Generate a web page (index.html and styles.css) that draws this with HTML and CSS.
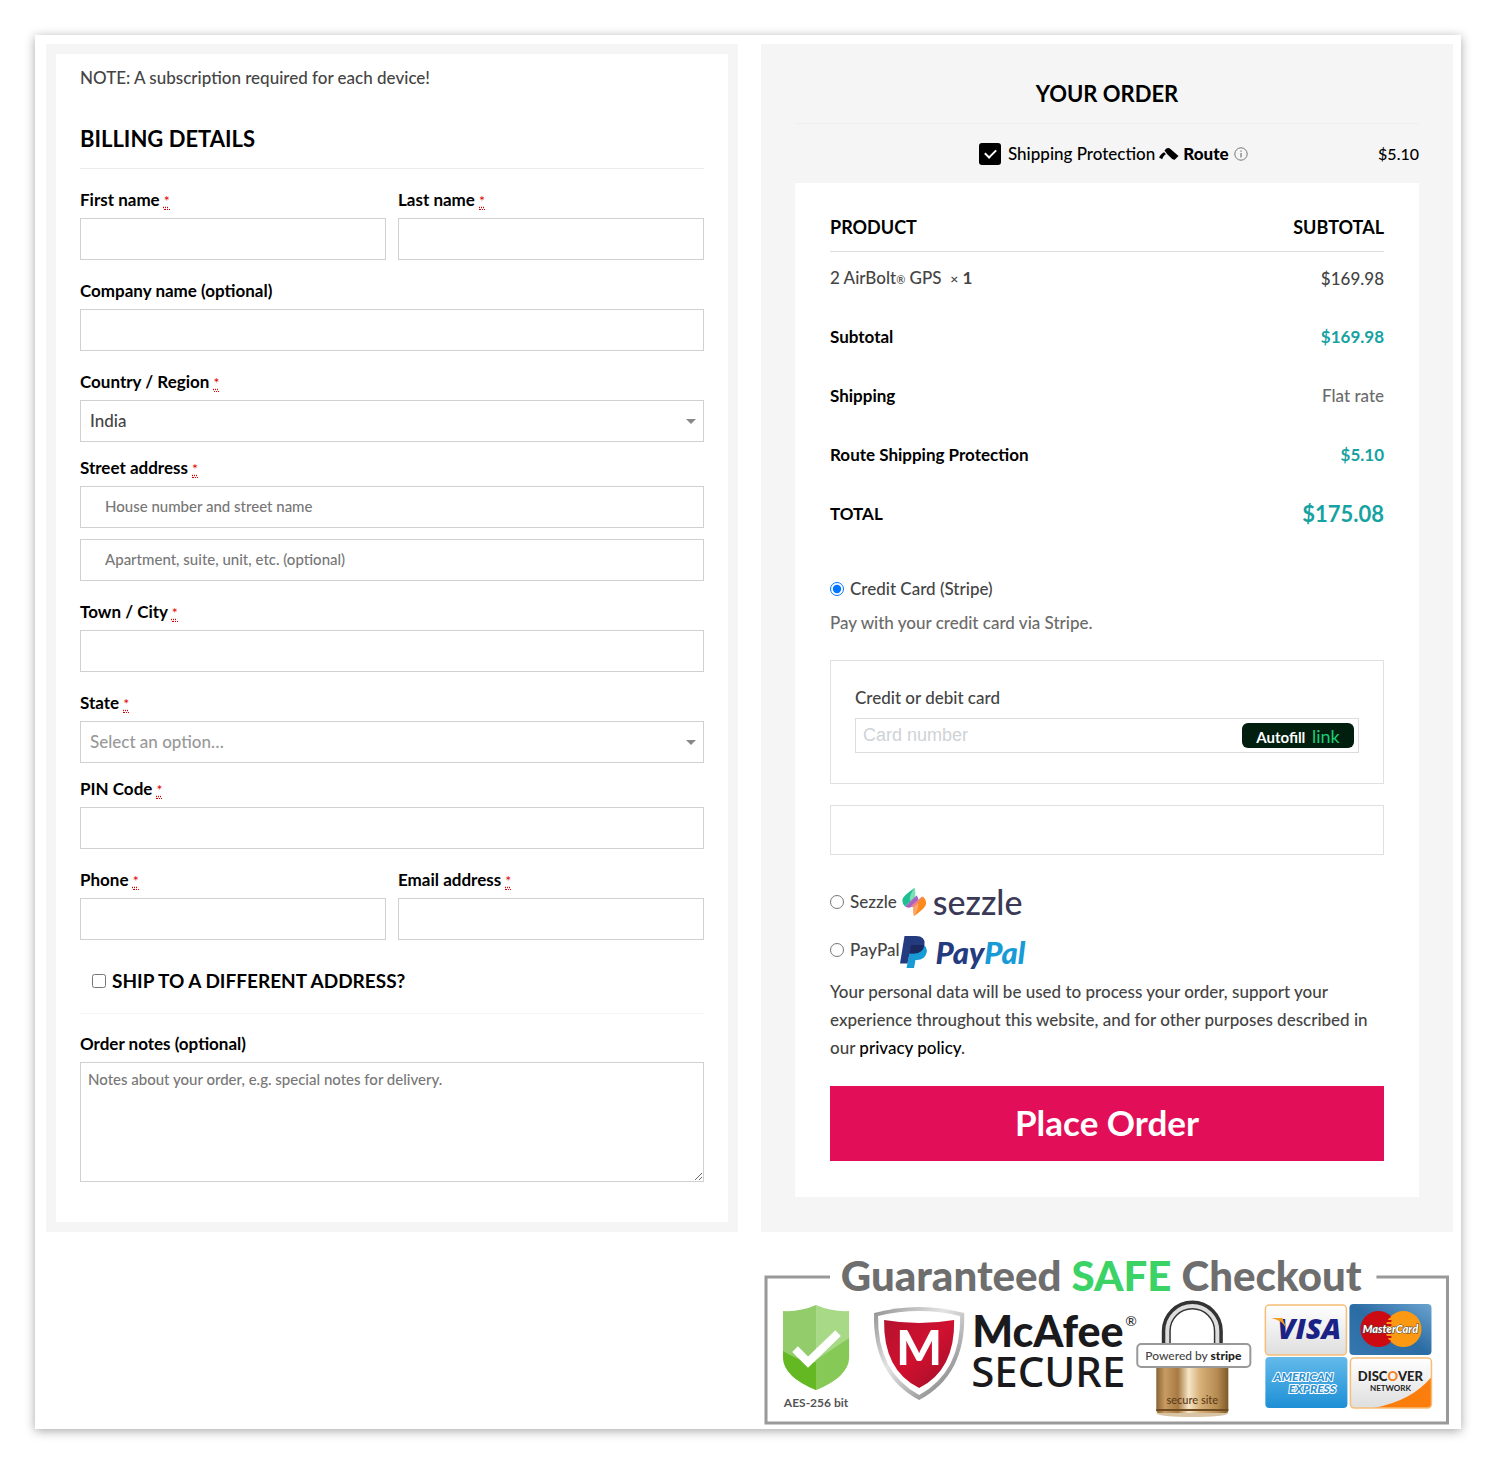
FILE: index.html
```
<!DOCTYPE html>
<html lang="en">
<head>
  <meta charset="UTF-8" />
  <meta name="viewport" content="width=device-width, initial-scale=1.0"/>
  <title>Checkout</title>
  <link rel="stylesheet" href="styles.css">
</head>
<body>

  <form class="checkout">
    <div class="columns">

      <section class="billing">
        <p class="note">NOTE: A subscription required for each device!</p>
        <h2 class="billing-title">Billing details</h2>

        <div class="row">
          <div class="field">
            <label for="first_name">First name <abbr class="required" title="required">*</abbr></label>
            <input type="text" id="first_name" />
          </div>
          <div class="field">
            <label for="last_name">Last name <abbr class="required" title="required">*</abbr></label>
            <input type="text" id="last_name" />
          </div>
        </div>

        <div class="field">
          <label for="company">Company name (optional)</label>
          <input type="text" id="company" />
        </div>

        <div class="field field-select">
          <label for="country">Country / Region <abbr class="required" title="required">*</abbr></label>
          <div class="select">
            <select id="country">
              <option>India</option>
            </select>
          </div>
        </div>

        <div class="field">
          <label for="address_1">Street address <abbr class="required" title="required">*</abbr></label>
          <input type="text" id="address_1" placeholder="House number and street name" />
          <input type="text" id="address_2" placeholder="Apartment, suite, unit, etc. (optional)" aria-label="Apartment, suite, unit, etc. (optional)" />
        </div>

        <div class="field">
          <label for="city">Town / City <abbr class="required" title="required">*</abbr></label>
          <input type="text" id="city" />
        </div>

        <div class="field field-select">
          <label for="state">State <abbr class="required" title="required">*</abbr></label>
          <div class="select">
            <select id="state" class="empty">
              <option>Select an option…</option>
            </select>
          </div>
        </div>

        <div class="field">
          <label for="postcode">PIN Code <abbr class="required" title="required">*</abbr></label>
          <input type="text" id="postcode" />
        </div>

        <div class="row">
          <div class="field">
            <label for="phone">Phone <abbr class="required" title="required">*</abbr></label>
            <input type="tel" id="phone" />
          </div>
          <div class="field">
            <label for="email">Email address <abbr class="required" title="required">*</abbr></label>
            <input type="email" id="email" />
          </div>
        </div>

        <h3 class="ship-different">
          <input type="checkbox" id="ship_different" />
          <label for="ship_different">Ship to a different address?</label>
        </h3>

        <div class="field field-notes">
          <label for="notes">Order notes (optional)</label>
          <textarea id="notes" placeholder="Notes about your order, e.g. special notes for delivery."></textarea>
        </div>
      </section>

      <section class="order">
        <h2 class="order-title">Your order</h2>

        <div class="protection">
          <input type="checkbox" id="protection" checked />
          <label for="protection">Shipping Protection</label>
          <svg class="route-mark" viewBox="0 0 20 12" width="20" height="12" aria-hidden="true">
            <path d="M0 9.500 Q3 4.500 5.200 4.300 L7 6.300 Q5 6.600 3.200 11.200 Z M5.500 2.400 Q8.500 -1.400 11.500 1 L19.500 8 L15.700 11.800 Q14.300 12 13.200 11 L8.500 6.500 Z"/>
          </svg>
          <span class="route-name">Route</span>
          <svg class="info" viewBox="0 0 14 14" width="14" height="14" aria-hidden="true">
            <circle cx="7" cy="7" r="6.200" fill="none" stroke="#777"/>
            <path d="M7 6v4.500M7 3.500v1.300" stroke="#777" stroke-width="1.200"/>
          </svg>
          <span class="protection-price">$5.10</span>
        </div>

        <div class="review">
          <table class="totals">
            <thead>
              <tr><th>Product</th><th>Subtotal</th></tr>
            </thead>
            <tbody>
              <tr><td>2 AirBolt<span class="reg">®</span> GPS&nbsp; <small>×</small> <strong>1</strong></td><td>$169.98</td></tr>
            </tbody>
            <tfoot>
              <tr><th>Subtotal</th><td class="amount">$169.98</td></tr>
              <tr><th>Shipping</th><td class="rate">Flat rate</td></tr>
              <tr><th>Route Shipping Protection</th><td class="amount">$5.10</td></tr>
              <tr class="grand"><th>TOTAL</th><td class="amount">$175.08</td></tr>
            </tfoot>
          </table>

          <div class="method">
            <input type="radio" name="payment" id="pay_stripe" checked />
            <label for="pay_stripe">Credit Card (Stripe)</label>
          </div>
          <p class="method-info">Pay with your credit card via Stripe.</p>

          <div class="card-box">
            <label for="card_number">Credit or debit card</label>
            <div class="card-input">
              <input type="text" id="card_number" placeholder="Card number" />
              <button type="button" class="autofill">Autofill <span>link</span></button>
            </div>
          </div>
          <div class="wallet-box"></div>

          <div class="method method-logo">
            <input type="radio" name="payment" id="pay_sezzle" />
            <label for="pay_sezzle">Sezzle</label>
            <svg class="sezzle-icon" viewBox="0 0 24 28" width="24" height="28" aria-hidden="true">
              <path d="M12.500 0 Q13.500 5 13 9 L3 18.500 Q-1 14 1 10 Q2.500 7 12.500 0Z" fill="#1fbf93"/>
              <path d="M12.500 0 Q14 4 13 9 L8 13 Q6.500 8 12.500 0Z" fill="#7be0b6"/>
              <path d="M3 18.500 L14.500 7.500 Q17 10 16 13 Q13 18 8 19.500 Q5 20 3 18.500Z" fill="#a566c0"/>
              <path d="M9 18 L20.500 8 Q19 14 13 19 Q11 20 9 18Z" fill="#ee7e9c"/>
              <path d="M21 8.500 Q25.500 13 23.500 17.500 Q21 22 12 28 Q11 23 11.500 19 Z" fill="#ff8a1f"/>
              <path d="M11.500 19 L16 15 Q17.500 20 12 28 Q10.500 23 11.500 19Z" fill="#fba96b"/>
            </svg>
            <span class="sezzle-name">sezzle</span>
          </div>
          <div class="method method-logo">
            <input type="radio" name="payment" id="pay_paypal" />
            <label for="pay_paypal">PayPal</label>
            <svg class="paypal-icon" viewBox="0 0 27 32" width="27" height="32" aria-hidden="true">
              <path d="M11 9 H24 Q28 12 26.500 17 Q24.500 24 17 24 H15.500 L14 32 H6.500 L8 25 Z" fill="#179bd7"/>
              <path d="M4.500 0 H16 Q25.500 0 24.500 8.500 Q23 17.500 13.500 17.500 H9.500 L7.500 27.500 H0 Z" fill="#253b80"/>
              <path d="M11 9 H24 Q23.500 17.500 13.500 17.500 H9.500 Z" fill="#1a2a60"/>
            </svg>
            <span class="paypal-name">Pay<span>Pal</span></span>
          </div>

          <p class="privacy">Your personal data will be used to process your order, support your experience throughout this website, and for other purposes described in our <a href="#">privacy policy</a>.</p>
          <button type="submit" class="place-order">Place Order</button>
        </div>
      </section>
    </div>

    <div class="safe">
      <svg class="safe-badge" viewBox="0 -14 685 179" role="img" aria-label="Guaranteed SAFE Checkout">
        <defs>
          <linearGradient id="silver" x1="0" y1="0" x2="1" y2="1">
            <stop offset="0" stop-color="#8f8f8f"/><stop offset=".4" stop-color="#e4e4e4"/><stop offset="1" stop-color="#6d6d6d"/>
          </linearGradient>
          <linearGradient id="red" x1="0" y1="0" x2="1" y2="1">
            <stop offset="0" stop-color="#b5122e"/><stop offset=".5" stop-color="#d0102f"/><stop offset="1" stop-color="#9c1029"/>
          </linearGradient>
          <linearGradient id="brass">
            <stop offset="0" stop-color="#8a6434"/><stop offset=".12" stop-color="#c79c62"/><stop offset=".3" stop-color="#a87a42"/><stop offset=".45" stop-color="#f6e6c8"/><stop offset=".6" stop-color="#d8b27a"/><stop offset=".85" stop-color="#b58a50"/><stop offset="1" stop-color="#7d5929"/>
          </linearGradient>
          <linearGradient id="paper" x1="0" y1="0" x2="0" y2="1">
            <stop offset="0" stop-color="#fff"/><stop offset="1" stop-color="#dedede"/>
          </linearGradient>
          <linearGradient id="mc" x1="1" y1="0" x2="0" y2="1">
            <stop offset="0" stop-color="#6aa3cf"/><stop offset=".5" stop-color="#2b6ca5"/><stop offset="1" stop-color="#3577ae"/>
          </linearGradient>
          <linearGradient id="amex" x1="0" y1="0" x2="0" y2="1">
            <stop offset="0" stop-color="#63baea"/><stop offset="1" stop-color="#1d8fd6"/>
          </linearGradient>
        </defs>

        <path class="frame" d="M66 17H2V163H683V17H612"/>
        <text class="safe-title" x="337" y="31" text-anchor="middle">Guaranteed <tspan class="green">SAFE</tspan> Checkout</text>

        <!-- AES shield -->
        <path d="M52 45 Q36 52 19 51 V98 Q20 117 52 130Z" fill="#93cd6b"/>
        <path d="M52 45 Q68 52 85 51 V98 Q84 117 52 130Z" fill="#a7d987"/>
        <path d="M19 91 Q40 104 52 102 V130 Q20 117 19 98Z" fill="#64b821"/>
        <path d="M52 100 L85 78 V98 Q84 117 52 130Z" fill="#86c957"/>
        <path d="M31 89 L44 102 L74 73" fill="none" stroke="#fff" stroke-width="8"/>
        <text class="aes" x="52" y="147" text-anchor="middle">AES-256 bit</text>

        <!-- McAfee shield -->
        <path d="M110 53 Q155 41 200 53 Q202 115 155 140 Q108 115 110 53Z" fill="url(#silver)"/>
        <path d="M114 56 Q155 46 196 56 Q197 112 155 135 Q113 112 114 56Z" fill="#fff"/>
        <path d="M120 60 Q155 66 190 60 Q191 110 155 128 Q119 110 120 60Z" fill="url(#red)"/>
        <text class="m" x="155" y="105" text-anchor="middle">M</text>
        <text class="mcafee" x="208" y="87">McAfee</text>
        <text class="reg-mark" x="361" y="66">®</text>
        <text class="secure" x="207" y="127">SECURE</text>

        <!-- padlock -->
        <path d="M402 90 V71 A26 26 0 0 1 454 71 V90" fill="none" stroke="#333" stroke-width="9"/>
        <path d="M403 90 V71 A25 25 0 0 1 453 71 V90" fill="none" stroke="#ddd" stroke-width="4"/>
        <ellipse cx="428" cy="153" rx="36" ry="4" fill="#d9c3a5"/>
        <rect x="392" y="100" width="72" height="53" rx="3" fill="url(#brass)"/>
        <path d="M392 150H464" stroke="#6d4a1f" stroke-width="2"/>
        <rect x="373" y="84" width="113" height="23" rx="4" fill="#fff" stroke="#999" stroke-width="2"/>
        <text class="powered" x="429" y="100" text-anchor="middle">Powered by <tspan class="stripe">stripe</tspan></text>
        <text class="secure-site" x="428" y="144" text-anchor="middle">secure site</text>

        <!-- cards -->
        <rect x="501" y="45" width="81" height="50" rx="4" fill="url(#paper)" stroke="#f6bd76" stroke-width="1.500"/>
        <text class="visa" x="545" y="79" text-anchor="middle">VISA</text>
        <path d="M507 58 H518 L522 68 Q517 60 507 58Z" fill="#f49b22"/>
        <rect x="585" y="44" width="82" height="51" rx="4" fill="url(#mc)"/>
        <circle cx="614" cy="69" r="18" fill="#cc0a12"/>
        <circle cx="639" cy="69" r="18" fill="#fb9a12"/>
        <path d="M626 57h-4M627 61h-6M627 65h-6M627 73h-6M627 77h-6M626 81h-4" stroke="#cc0a12" stroke-width="2"/>
        <text class="mastercard" x="626" y="73" text-anchor="middle">MasterCard</text>
        <rect x="501" y="97" width="82" height="51" rx="4" fill="url(#amex)"/>
        <text class="american" x="539" y="121" text-anchor="middle">AMERICAN</text>
        <text class="american" x="548" y="133" text-anchor="middle">EXPRESS</text>
        <rect x="586" y="98" width="81" height="50" rx="4" fill="url(#paper)"/>
        <path d="M609 148 Q647 141 667 117 V144 Q667 148 663 148Z" fill="#fb7d0b"/>
        <rect x="586" y="98" width="81" height="50" rx="4" fill="none" stroke="#f6bd76" stroke-width="1.500"/>
        <text class="discover" x="626" y="121" text-anchor="middle">DISC<tspan class="orange">O</tspan>VER</text>
        <text class="network" x="626" y="131" text-anchor="middle">NETWORK</text>
      </svg>
    </div>
  </form>

</body>
</html>
```
FILE: styles.css
```
:root {
  --ink: #000;
  --text: #444;
  --muted: #6b6b6b;
  --line: #d0d0d0;
  --light: #f5f5f5;
  --teal: #17a2a2;
  --pink: #e20e57;
}

* {
  box-sizing: border-box;
}

body {
  margin: 0;
  padding: 35px;
  background: #fff;
  font-family: Lato, 'Open Sans', sans-serif;
  font-size: 17px;
  font-weight: 500;
  line-height: 24px;
  color: var(--text);
}

h2, h3, p {
  margin: 0;
}

input, select, textarea, button {
  font-family: inherit;
  font-weight: inherit;
}

.checkout {
  padding: 9px 8px 4px 11px;
  background: #fff;
  box-shadow: 0 2px 10px rgba(0,0,0,0.35);
}

.columns {
  display: flex;
  gap: 23px;
}

.billing, .order {
  flex: 1;
  min-width: 0;
}

/* billing */
.billing {
  border: 10px solid var(--light);
  padding: 12px 24px 40px;
}

.billing-title, .order-title {
  color: var(--ink);
  font-size: 22px;
  line-height: 30px;
  font-weight: 700;
  text-transform: uppercase;
}

.billing-title {
  margin-top: 34px;
  margin-bottom: 19px;
  padding-bottom: 14px;
  border-bottom: 1px solid #ececec;
}

.row {
  display: flex;
  gap: 12px;
}

.field {
  flex: 1;
  margin-bottom: 19px;
}

.field-select {
  margin-bottom: 14px;
}

.field label {
  display: block;
  margin-bottom: 6px;
  color: var(--ink);
  font-weight: 700;
}

.required {
  color: #d00;
  font-weight: 400;
  font-size: 14px;
  line-height: 14px;
  text-decoration: underline dotted;
  border-bottom: 1px dotted #d00;
}

.field input, .field select, .field textarea {
  display: block;
  width: 100%;
  height: 42px;
  border: 1px solid var(--line);
  border-radius: 0;
  background: #fff;
  color: var(--text);
  outline: none;
}

.field input {
  padding: 0 24px 2px;
  font-size: 15px;
}

.field input + input {
  margin-top: 11px;
}

.field ::placeholder {
  color: #777;
}

.select {
  position: relative;
}

.field select {
  appearance: none;
  padding: 0 9px 2px;
  font-size: 17px;
}

.field select.empty {
  color: #999;
}

.select::after {
  content: "";
  position: absolute;
  right: 8px;
  top: 19px;
  border: 5px solid transparent;
  border-top-color: #888;
  border-bottom: 0;
}

.ship-different {
  display: flex;
  align-items: center;
  gap: 6px;
  margin: 10px 0 18px;
  padding: 0 12px 20px;
  border-bottom: 1px solid #f4f4f4;
  color: var(--ink);
  font-size: 19px;
  line-height: 24px;
  font-weight: 700;
  text-transform: uppercase;
}

.ship-different input {
  width: 14px;
  height: 14px;
  margin: 0;
}

.field-notes {
  margin-bottom: 0;
}

.field textarea {
  height: 120px;
  padding: 4px 7px;
  font-size: 15px;
  line-height: 24px;
  resize: both;
}

/* order */
.order {
  padding: 35px 34px 34px;
  background: var(--light);
}

.order-title {
  padding-bottom: 14px;
  border-bottom: 1px solid #efefef;
  text-align: center;
}

.protection {
  display: flex;
  align-items: center;
  height: 59px;
  color: var(--ink);
}

.protection input {
  appearance: none;
  display: grid;
  place-items: center;
  width: 22px;
  height: 22px;
  margin: 0 7px 0 184px;
  border-radius: 3px;
  background: #000;
}

.protection input:checked::after {
  content: "";
  width: 5px;
  height: 9px;
  margin-bottom: 3px;
  border: solid #fff;
  border-width: 0 2px 2px 0;
  transform: rotate(45deg);
}

.route-mark {
  margin: 0 4px;
}

.route-name {
  font-weight: 900;
}

.info {
  margin-left: 5px;
}

.protection-price {
  margin-left: auto;
  font-size: 16px;
}

.review {
  padding: 24px 35px 36px;
  background: #fff;
}

.totals {
  width: 100%;
  border-collapse: collapse;
}

.totals th, .totals td {
  height: 59px;
  padding: 0;
  text-align: left;
}

.totals tbody td {
  height: 56px;
}

.totals th {
  color: var(--ink);
  font-weight: 700;
}

.totals th + th, .totals td:last-child {
  text-align: right;
}

.totals thead th {
  height: 44px;
  padding-bottom: 4px;
  border-bottom: 1px solid #ddd;
  font-size: 18px;
  text-transform: uppercase;
}

.totals small {
  font-size: 14px;
}

.reg {
  font-size: 11px;
}

.totals .rate {
  color: var(--muted);
}

.totals .amount {
  color: var(--teal);
  font-weight: 700;
}

.totals .grand .amount {
  font-size: 22px;
}

.method {
  display: flex;
  align-items: center;
  height: 24px;
}

.totals + .method {
  margin-top: 34px;
}

.method input {
  width: 14px;
  height: 14px;
  margin: 0 6px 0 0;
}

.method-info {
  margin-top: 10px;
  color: var(--muted);
}

.card-box {
  margin-top: 25px;
  padding: 25px 24px 30px;
  border: 1px solid #e0e0e0;
}

.card-box label {
  display: block;
  margin-bottom: 8px;
}

.card-input {
  display: flex;
  align-items: center;
  padding: 4px;
  border: 1px solid #dcdcdc;
}

.card-input input {
  flex: 1;
  min-width: 0;
  padding: 0 3px;
  border: 0;
  outline: none;
  font-family: 'Liberation Sans', sans-serif;
  font-size: 18px;
  font-weight: 400;
}

.card-input ::placeholder {
  color: #cfd3d6;
}

.autofill {
  width: 112px;
  height: 25px;
  padding: 0;
  border: 0;
  border-radius: 6px;
  background: #011e0f;
  color: #fff;
  font-size: 15px;
  font-weight: 700;
  white-space: nowrap;
}

.autofill span {
  margin-left: 3px;
  color: #1bce74;
  font-size: 18px;
  font-weight: 400;
}

.wallet-box {
  height: 50px;
  margin: 21px 0 23px;
  border: 1px solid #e0e0e0;
}

.method-logo {
  height: 48px;
}

.sezzle-icon {
  margin: 0 7px 0 5px;
}

.sezzle-name {
  color: #3b3a56;
  font-size: 34px;
}

.paypal-icon {
  margin-top: 4px;
  margin-right: 9px;
}

.paypal-name {
  margin-top: 4px;
  color: #253b80;
  font-size: 31px;
  font-weight: 900;
  font-style: italic;
}

.paypal-name span {
  color: #179bd7;
}

.privacy {
  margin-top: 4px;
  line-height: 28px;
}

.privacy a {
  color: var(--ink);
  text-decoration: none;
}

.place-order {
  display: block;
  width: 100%;
  height: 75px;
  margin-top: 24px;
  padding-bottom: 4px;
  border: 0;
  background: var(--pink);
  color: #fff;
  font-size: 35px;
  font-weight: 700;
  cursor: pointer;
}

/* trust badge */
.safe {
  width: 50%;
  margin-left: auto;
  padding: 14px 4px 0 14px;
}

.safe-badge {
  display: block;
  width: 100%;
}

.frame {
  fill: none;
  stroke: #999;
  stroke-width: 3;
}

.safe-title {
  fill: #6e6e6e;
  font-size: 42px;
  font-weight: 900;
}

.green {
  fill: #3bd266;
}

.aes {
  fill: #555;
  font-size: 12px;
  font-weight: 700;
}

.m {
  fill: #fff;
  font-size: 48px;
  font-weight: 900;
}

.mcafee {
  fill: #1a1a1c;
  font-size: 43px;
  font-weight: 900;
}

.reg-mark {
  fill: #333;
  font-size: 14px;
}

.secure {
  fill: #1a1a1c;
  font-family: 'Noto Sans', sans-serif;
  font-size: 42px;
}

.powered {
  fill: #444;
  font-size: 12px;
}

.stripe {
  fill: #222;
  font-weight: 900;
}

.secure-site {
  fill: #5c3a1a;
  font-size: 11px;
}

.visa {
  fill: #1a2286;
  font-family: 'Open Sans', sans-serif;
  font-size: 29px;
  font-weight: 800;
  font-style: italic;
}

.mastercard {
  fill: #fff;
  stroke: #444;
  stroke-width: 1px;
  paint-order: stroke;
  font-size: 11px;
  font-weight: 900;
  font-style: italic;
}

.american {
  fill: #2f93d2;
  stroke: #fff;
  stroke-width: 2px;
  paint-order: stroke;
  font-size: 12px;
  font-weight: 900;
  font-style: italic;
}

.discover {
  fill: #222;
  font-size: 13px;
  font-weight: 900;
}

.orange {
  fill: #f58220;
}

.network {
  fill: #222;
  font-size: 8px;
  font-weight: 700;
}

@media (max-width: 900px) {
  .columns {
    flex-direction: column;
  }
  .safe {
    width: 100%;
  }
}
```
